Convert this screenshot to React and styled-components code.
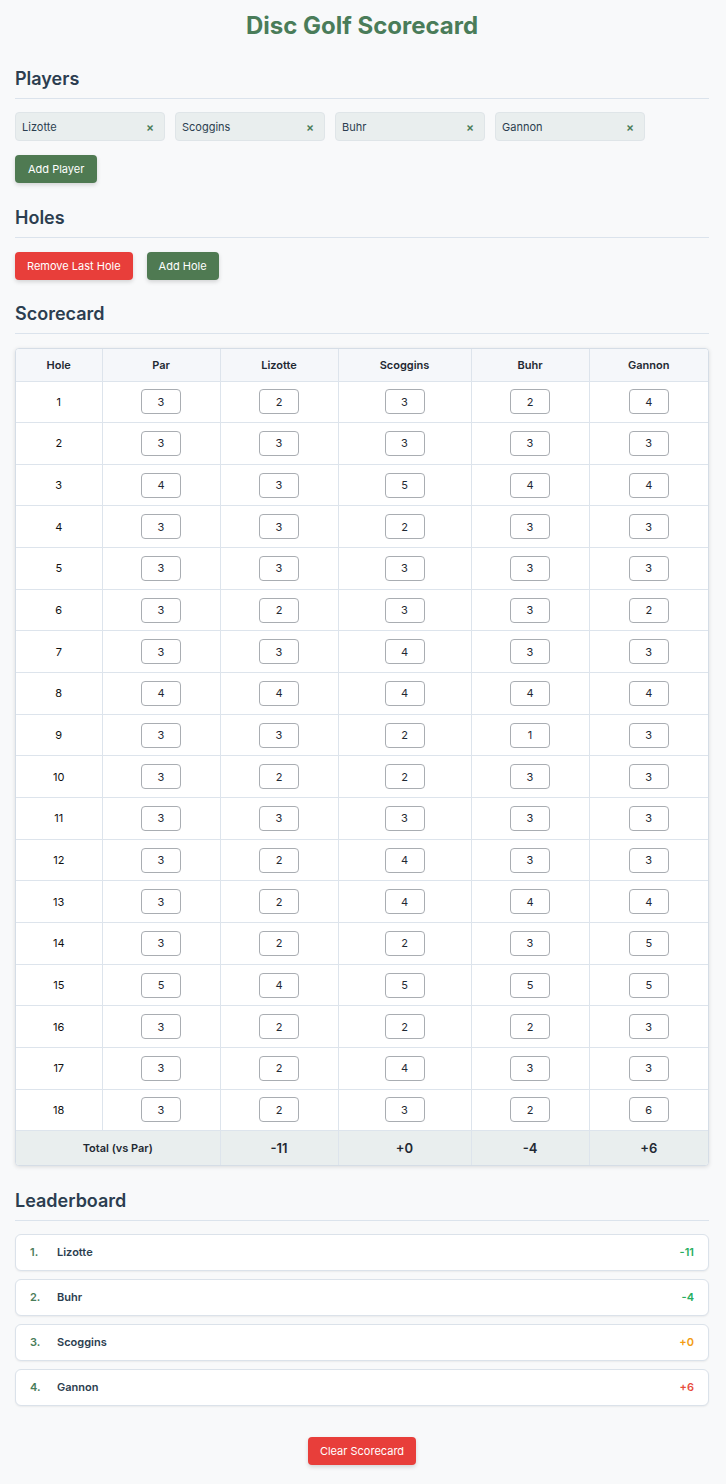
import React from 'react';
import styled, { createGlobalStyle } from 'styled-components';

const GlobalStyle = createGlobalStyle`
    * {
        box-sizing: border-box;
    }
    body {
        margin: 0;
        background-color: #f8f9fa;
        font-family: 'Inter', 'Liberation Sans', sans-serif;
        color: #2c3e50;
    }
`;

const Page = styled.div`
    padding: 13px 17px 18px 15px;
`;

const Title = styled.h1`
    margin: 0 0 30px;
    text-align: center;
    font-size: 24px;
    line-height: 25px;
    font-weight: 700;
    color: #4a7c59;
`;

const Section = styled.section`
    margin-bottom: ${p => p.$bottom || 24}px;
`;

const SectionTitle = styled.h2`
    margin: 0 0 ${p => p.$gap || 14}px;
    padding-bottom: 8px;
    font-size: 18px;
    line-height: 22px;
    font-weight: 600;
    color: #2c3e50;
    border-bottom: 1px solid #dbe3ec;
`;

const Tags = styled.div`
    display: flex;
    flex-wrap: wrap;
    gap: 10px;
`;

const Tag = styled.div`
    width: 150px;
    height: 29px;
    display: flex;
    align-items: center;
    justify-content: space-between;
    padding: 0 10px 0 6px;
    background-color: #e9eeee;
    border: 1px solid #dfe5e8;
    border-radius: 4px;
    font-size: 11px;
    color: #2c3e50;
`;

const RemoveX = styled.span`
    color: #4a7c59;
    font-size: 12px;
    font-weight: 600;
`;

const Button = styled.button`
    height: 28px;
    padding: 0 ${p => p.$pad || 12}px;
    border: none;
    border-radius: 4px;
    font-family: inherit;
    font-size: 11px;
    color: #fff;
    background-color: ${p => p.$danger ? '#e83e3a' : '#4f7a52'};
    box-shadow: 0 2px 4px rgba(0, 0, 0, 0.15);
    cursor: pointer;
`;

const Actions = styled.div`
    display: flex;
    gap: 14px;
    margin-top: ${p => p.$top || 0}px;
`;

const TableBox = styled.div`
    border: 1px solid #d5dde6;
    border-radius: 4px;
    overflow: hidden;
    background-color: #fff;
    box-shadow: 0 1px 4px rgba(0, 0, 0, 0.12);
`;

const Table = styled.table`
    width: 100%;
    border-collapse: collapse;
    table-layout: fixed;
    font-size: 11px;
`;

const Th = styled.th`
    width: ${p => p.$w}px;
    height: 32px;
    padding: 0;
    background-color: #f5f7fa;
    border: 1px solid #dde4ec;
    border-top: none;
    font-weight: 600;
    color: #1f2933;
    &:first-child { border-left: none; }
    &:last-child { border-right: none; }
`;

const Td = styled.td`
    height: 41.67px;
    padding: 0;
    text-align: center;
    vertical-align: middle;
    border: 1px solid #dde4ec;
    color: #111;
    &:first-child { border-left: none; }
    &:last-child { border-right: none; }
`;

const TotalCell = styled.td`
    height: 34px;
    padding: 0;
    text-align: center;
    background-color: #e9eeee;
    border: 1px solid #dde4ec;
    border-bottom: none;
    font-weight: 600;
    font-size: ${p => p.$big ? 13 : 11}px;
    color: #1f2933;
    &:first-child { border-left: none; }
    &:last-child { border-right: none; }
`;

const ScoreInput = styled.input`
    width: 40px;
    height: 25px;
    padding: 0;
    text-align: center;
    font-family: inherit;
    font-size: 11px;
    color: #1f2933;
    background: #fff;
    border: 1px solid #a9adb2;
    border-radius: 4px;
`;

const Board = styled.div`
    display: flex;
    flex-direction: column;
    gap: 8px;
`;

const BoardItem = styled.div`
    height: 37px;
    display: flex;
    align-items: center;
    padding: 0 14px;
    background-color: #fff;
    border: 1px solid #dbe2ea;
    border-radius: 6px;
    box-shadow: 0 1px 2px rgba(0, 0, 0, 0.06);
    font-size: 11px;
    font-weight: 600;
`;

const Rank = styled.span`
    width: 27px;
    color: #4a7c59;
`;

const Name = styled.span`
    flex: 1;
    color: #2c3e50;
`;

const Diff = styled.span`
    color: ${p => p.$v < 0 ? '#27ae60' : p.$v === 0 ? '#f39c12' : '#e74c3c'};
`;

const Footer = styled.div`
    display: flex;
    justify-content: center;
    margin-top: 31px;
`;

const players = ['Lizotte', 'Scoggins', 'Buhr', 'Gannon'];
const par = [3, 3, 4, 3, 3, 3, 3, 4, 3, 3, 3, 3, 3, 3, 5, 3, 3, 3];
const scores = [
    [2, 3, 3, 3, 3, 2, 3, 4, 3, 2, 3, 2, 2, 2, 4, 2, 2, 2],
    [3, 3, 5, 2, 3, 3, 4, 4, 2, 2, 3, 4, 4, 2, 5, 2, 4, 3],
    [2, 3, 4, 3, 3, 3, 3, 4, 1, 3, 3, 3, 4, 3, 5, 2, 3, 2],
    [4, 3, 4, 3, 3, 2, 3, 4, 3, 3, 3, 3, 4, 5, 5, 3, 3, 6],
];
const colWidths = [86, 118, 118, 133, 118, 119];

const sum = arr => arr.reduce((a, b) => a + b, 0);
const fmt = v => (v > 0 ? '+' + v : v === 0 ? '+0' : String(v));

const App = () => {
    const parTotal = sum(par);
    const diffs = scores.map(s => sum(s) - parTotal);
    const ranking = players
        .map((name, i) => ({ name, diff: diffs[i] }))
        .sort((a, b) => a.diff - b.diff);

    return (
        <Page>
            <GlobalStyle />
            <Title>Disc Golf Scorecard</Title>

            <Section>
                <SectionTitle $gap={13}>Players</SectionTitle>
                <Tags>
                    {players.map(p => (
                        <Tag key={p}>
                            {p}
                            <RemoveX>×</RemoveX>
                        </Tag>
                    ))}
                </Tags>
                <Actions $top={14}>
                    <Button $pad={13}>Add Player</Button>
                </Actions>
            </Section>

            <Section $bottom={23}>
                <SectionTitle>Holes</SectionTitle>
                <Actions>
                    <Button $danger>Remove Last Hole</Button>
                    <Button>Add Hole</Button>
                </Actions>
            </Section>

            <Section>
                <SectionTitle>Scorecard</SectionTitle>
                <TableBox>
                    <Table>
                        <thead>
                            <tr>
                                <Th $w={colWidths[0]}>Hole</Th>
                                <Th $w={colWidths[1]}>Par</Th>
                                {players.map((p, i) => (
                                    <Th key={p} $w={colWidths[i + 2]}>{p}</Th>
                                ))}
                            </tr>
                        </thead>
                        <tbody>
                            {par.map((pv, h) => (
                                <tr key={h}>
                                    <Td>{h + 1}</Td>
                                    <Td><ScoreInput defaultValue={pv} /></Td>
                                    {scores.map((s, i) => (
                                        <Td key={i}><ScoreInput defaultValue={s[h]} /></Td>
                                    ))}
                                </tr>
                            ))}
                            <tr>
                                <TotalCell colSpan={2}>Total (vs Par)</TotalCell>
                                {diffs.map((d, i) => (
                                    <TotalCell key={i} $big>{fmt(d)}</TotalCell>
                                ))}
                            </tr>
                        </tbody>
                    </Table>
                </TableBox>
            </Section>

            <Section>
                <SectionTitle $gap={13}>Leaderboard</SectionTitle>
                <Board>
                    {ranking.map((r, i) => (
                        <BoardItem key={r.name}>
                            <Rank>{i + 1}.</Rank>
                            <Name>{r.name}</Name>
                            <Diff $v={r.diff}>{fmt(r.diff)}</Diff>
                        </BoardItem>
                    ))}
                </Board>
            </Section>

            <Footer>
                <Button $danger>Clear Scorecard</Button>
            </Footer>
        </Page>
    );
};

export default App;
